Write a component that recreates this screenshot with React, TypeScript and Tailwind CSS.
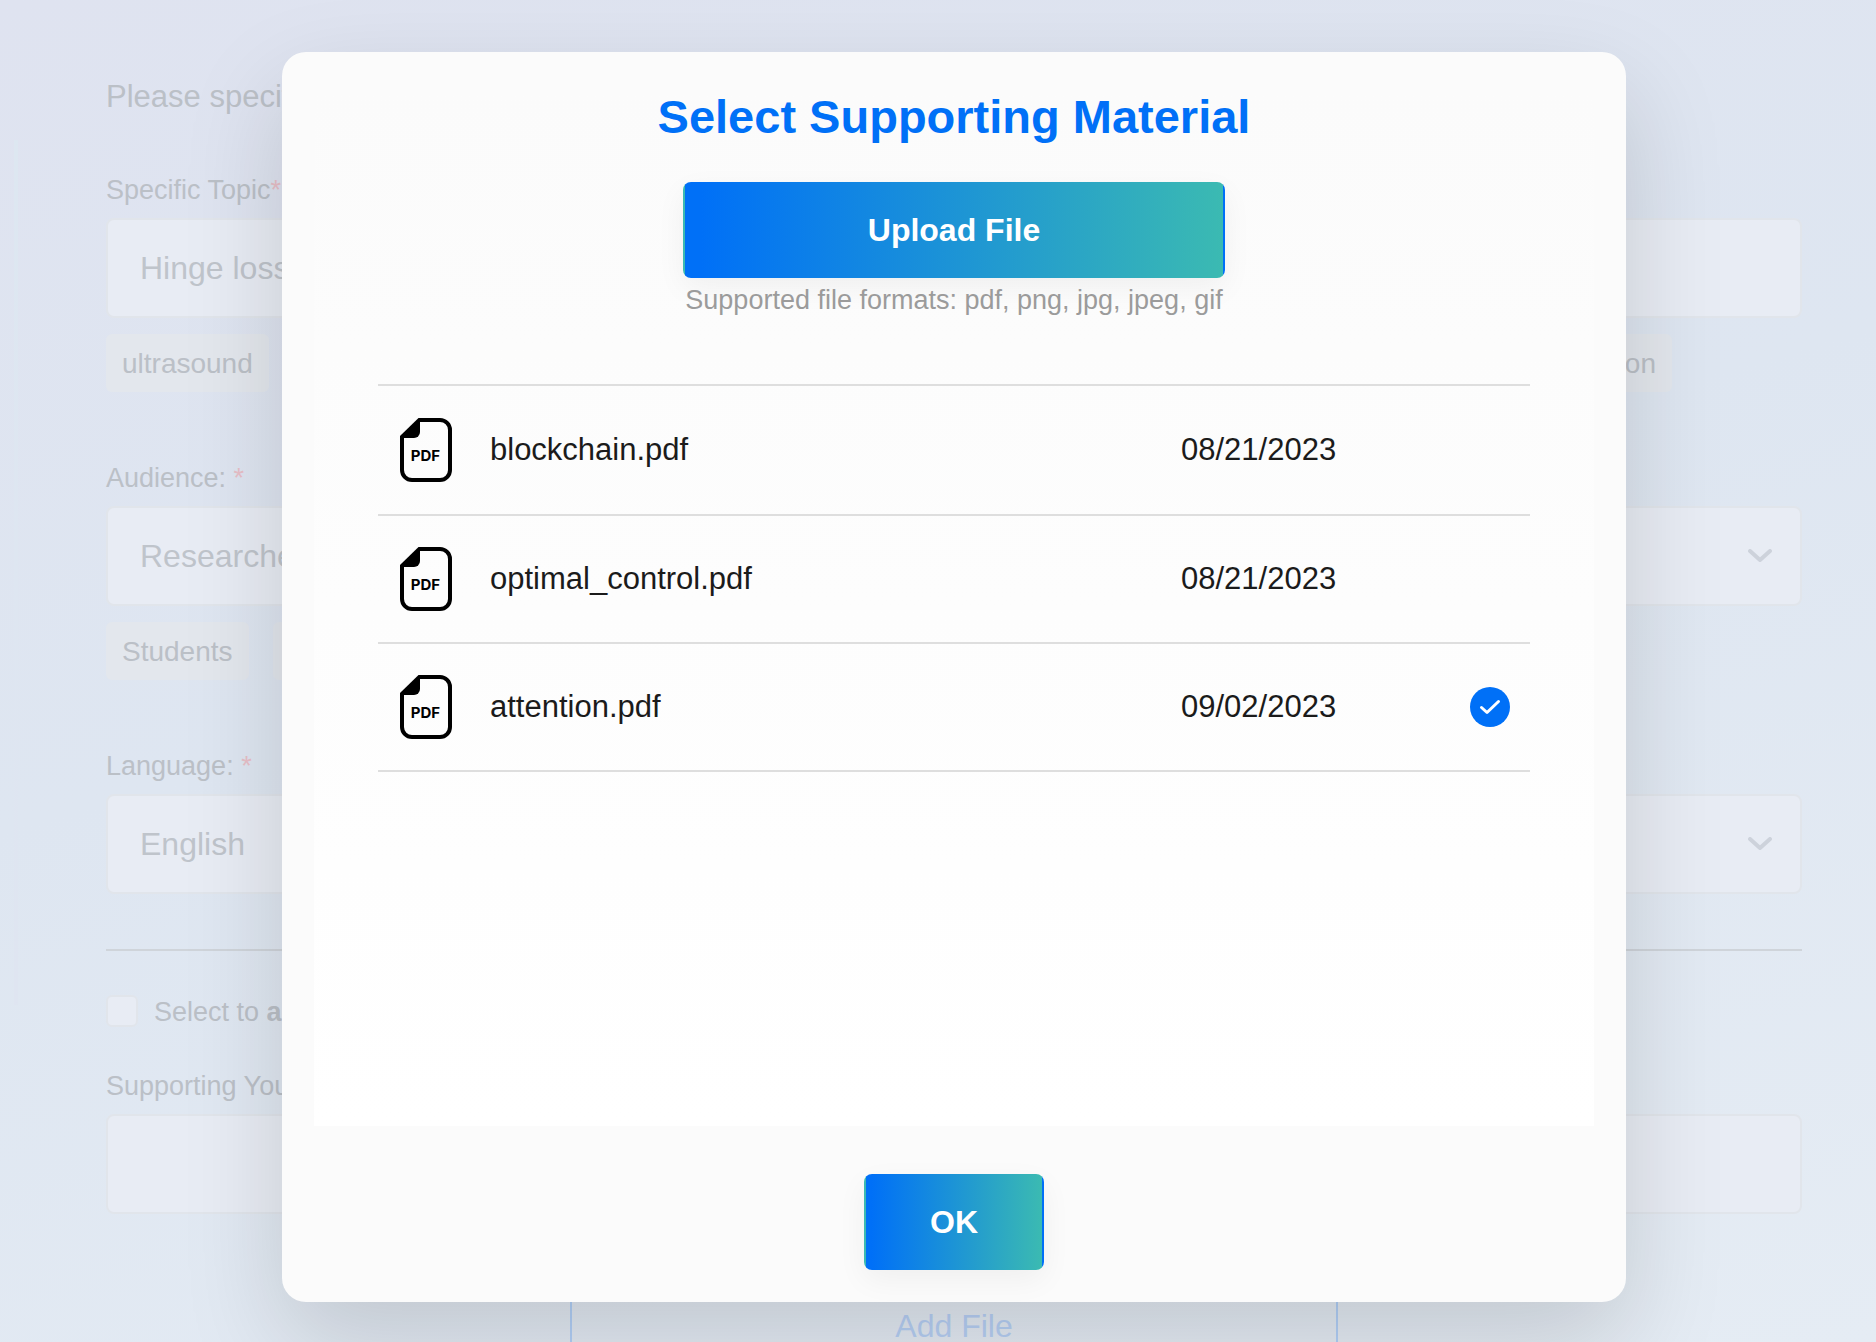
import React, { useState } from "react";

type Material = { name: string; date: string };

const materials: Material[] = [
  { name: "blockchain.pdf", date: "08/21/2023" },
  { name: "optimal_control.pdf", date: "08/21/2023" },
  { name: "attention.pdf", date: "09/02/2023" },
];

const fieldClass =
  "block h-[100px] w-full appearance-none rounded-lg border-2 border-[#e1e5eb] bg-[#e8ecf4] px-8 text-[32px] text-[#bfc4cb] outline-none";

const gradientButton =
  "h-24 rounded-lg border-2 border-transparent bg-[linear-gradient(90deg,#0070f7_3%,#3bbab2)] text-[32px] font-bold text-white shadow-[0_10px_30px_rgba(0,0,0,0.05)]";

function PdfIcon() {
  return (
    <svg viewBox="0 0 64 64" className="mx-4 block size-16" aria-hidden="true">
      <path
        d="M25.500 2H46a10 10 0 0 1 10 10V52a10 10 0 0 1-10 10H18a10 10 0 0 1-10-10V18.500"
        fill="none"
        stroke="#000"
        strokeWidth="4"
      />
      <path d="M6 18L24.500 0H26V14a6 6 0 0 1-6 6H6Z" fill="#000" />
      <text
        x="31.500"
        y="42.500"
        textAnchor="middle"
        fontFamily="Inter, sans-serif"
        fontWeight="700"
        fontSize="15"
        fill="#000"
      >
        PDF
      </text>
    </svg>
  );
}

function CheckBadge() {
  return (
    <svg viewBox="0 0 40 40" className="block size-10" role="img" aria-label="Selected">
      <circle cx="20" cy="20" r="20" fill="#0070f7" />
      <path
        d="M11.500 20.500L17 25.500L28.500 14.500"
        fill="none"
        stroke="#fff"
        strokeWidth="3"
        strokeLinecap="round"
        strokeLinejoin="round"
      />
    </svg>
  );
}

function Label({ htmlFor, children, required }: { htmlFor: string; children: React.ReactNode; required?: boolean }) {
  return (
    <label htmlFor={htmlFor} className="mb-1.5 block text-[27px] leading-[44px]">
      {children}
      {required && <span className="text-[#e8bfc8]">*</span>}
    </label>
  );
}

function Chip({ children }: { children: React.ReactNode }) {
  return (
    <button type="button" className="h-[58px] rounded-md bg-[#e3e7ed] px-4 pt-0.5 text-[28px]">
      {children}
    </button>
  );
}

function SelectField({ id, options }: { id: string; options: string[] }) {
  return (
    <div className="relative">
      <select id={id} className={fieldClass}>
        {options.map((o) => (
          <option key={o}>{o}</option>
        ))}
      </select>
      <svg
        viewBox="0 0 24 14"
        className="pointer-events-none absolute top-[43px] right-[30px] h-3.5 w-6"
        fill="none"
        stroke="#cdd2db"
        strokeWidth="4"
        strokeLinecap="round"
        strokeLinejoin="round"
        aria-hidden="true"
      >
        <path d="M2 2L12 11L22 2" />
      </svg>
    </div>
  );
}

function FormPage() {
  return (
    <div className="flex items-start pl-[14px]">
      <div className="mt-[140px] h-[865px] w-1 shrink-0 bg-gradient-to-b from-[#dde7f1] to-[#dfe5f1]" />
      <form className="ml-[88px] min-w-0 flex-1 pt-[75px] pr-[74px] text-[#bbc0c7]">
        <p className="mb-[49px] text-[31px] leading-[44px]">Please specify</p>

        <Label htmlFor="topic" required>
          Specific Topic
        </Label>
        <input id="topic" type="text" defaultValue="Hinge loss" className={fieldClass} />
        <div className="mt-4 mb-16 flex justify-between pr-[130px]">
          <Chip>ultrasound</Chip>
          <Chip>segmentation</Chip>
        </div>

        <Label htmlFor="audience" required>
          Audience:{" "}
        </Label>
        <SelectField id="audience" options={["Researchers", "Students", "Faculty"]} />
        <div className="mt-4 mb-16 flex gap-6">
          <Chip>Students</Chip>
          <Chip>Faculty</Chip>
        </div>

        <Label htmlFor="language" required>
          Language:{" "}
        </Label>
        <SelectField id="language" options={["English"]} />

        <hr className="mt-[55px] mb-11 border-t-2 border-[#cfd4da]" />

        <label className="flex h-8 items-center gap-4 text-[27px]">
          <input
            type="checkbox"
            className="size-8 appearance-none rounded-md border-2 border-[#e1e5eb] bg-[#e8ecf4]"
          />
          <span className="pt-0.5">
            Select to <b>add</b>
          </span>
        </label>

        <div className="mt-[37px]">
          <Label htmlFor="video">Supporting YouTube</Label>
          <input id="video" type="text" className={fieldClass} />
        </div>

        <button
          type="button"
          className="mx-auto mt-[63px] block h-24 w-[768px] border-2 border-[#b2d0f8] pt-0.5 text-[32px] text-[#b7d0f5]"
        >
          Add File
        </button>
      </form>
    </div>
  );
}

export default function App() {
  const [selected, setSelected] = useState("attention.pdf");

  return (
    <div className="relative h-screen overflow-hidden bg-[linear-gradient(165deg,#dfe3f0,#dee6f1_45%,#e5ecf4)] font-['Liberation_Sans',Arial,sans-serif]">
      <FormPage />

      <div className="absolute inset-0 flex justify-center pt-[52px] pb-10 pl-8">
        <div
          role="dialog"
          aria-modal="true"
          aria-labelledby="dialog-title"
          className="flex w-[1344px] max-w-full flex-col rounded-3xl bg-[#fbfbfb] p-8 shadow-[0_40px_100px_rgba(0,0,0,0.15)]"
        >
          <div className="flex flex-1 flex-col bg-gradient-to-b from-[#fbfbfb] to-white">
            <h2 id="dialog-title" className="text-center text-[47px] leading-[66px] font-bold text-[#0070f7]">
              Select Supporting Material
            </h2>
            <div className="mx-auto mt-8 flex w-[542px] flex-col text-center">
              <button type="button" className={gradientButton}>
                Upload File
              </button>
              <p className="text-[27px] leading-[44px] text-[#9b9b9b]">
                Supported file formats: pdf, png, jpg, jpeg, gif
              </p>
            </div>

            <div className="mt-[62px] px-16">
              <table className="w-full table-fixed border-separate border-spacing-0 border-t-2 border-[#dedede] text-left text-[31px] text-[#1b1b1b]">
                <colgroup>
                  <col className="w-28" />
                  <col />
                  <col className="w-[273px]" />
                  <col className="w-[76px]" />
                </colgroup>
                <tbody>
                  {materials.map((m) => (
                    <tr
                      key={m.name}
                      onClick={() => setSelected(m.name)}
                      className="h-32 cursor-pointer first:h-[130px]"
                    >
                      <td className="border-b-2 border-[#dedede]">
                        <PdfIcon />
                      </td>
                      <td className="border-b-2 border-[#dedede]">{m.name}</td>
                      <td className="border-b-2 border-[#dedede]">{m.date}</td>
                      <td className="border-b-2 border-[#dedede] pl-4">
                        {selected === m.name && <CheckBadge />}
                      </td>
                    </tr>
                  ))}
                </tbody>
              </table>
            </div>
          </div>

          <button type="button" className={`mx-auto mt-12 w-[180px] shrink-0 ${gradientButton}`}>
            OK
          </button>
        </div>
      </div>
    </div>
  );
}
